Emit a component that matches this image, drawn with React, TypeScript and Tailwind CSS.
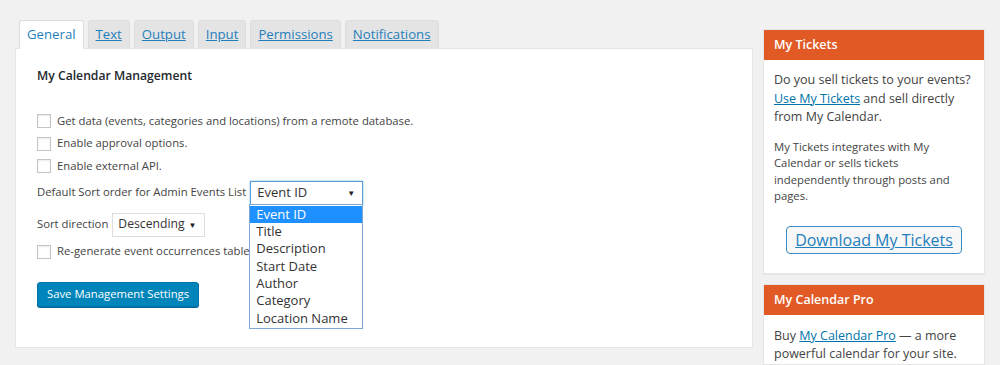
import React from 'react';

const tabs = ['General', 'Text', 'Output', 'Input', 'Permissions', 'Notifications'];
const sortOptions = ['Event ID', 'Title', 'Description', 'Start Date', 'Author', 'Category', 'Location Name'];

const Checkbox = () => (
  <span className="inline-block w-[14px] h-[14px] border border-[#c3c6c9] bg-white shadow-[inset_0_1px_2px_rgba(0,0,0,0.08)] mr-[6px] shrink-0" />
);

const CheckRow = ({ label }: { label: string }) => (
  <div className="flex items-center h-[22.5px]">
    <Checkbox />
    <span>{label}</span>
  </div>
);

const Arrow = () => <span className="text-[8px] text-[#222] leading-none">▼</span>;

const SideBox = ({ title, children }: { title: string; children: React.ReactNode }) => (
  <div className="bg-white border border-[#e5e5e5] shadow-[0_1px_1px_rgba(0,0,0,0.04)]">
    <div className="h-[30px] bg-[#e15a25] text-white font-semibold text-[12.5px] flex items-center px-[10px]">{title}</div>
    <div className="pl-[10px] pr-[6px]">{children}</div>
  </div>
);

export default function App() {
  return (
    <div className="w-full h-[365px] bg-[#f1f1f1] flex pt-[20px] pl-[15px] overflow-hidden text-[#444] font-['Open_Sans',sans-serif] text-[11.3px]">
      <div className="w-[738px] shrink-0">
        <div className="flex gap-[4px] pl-[4px] h-[28px]">
          {tabs.map((t, i) => (
            <div
              key={t}
              className={`h-[29px] px-[7px] flex items-center border border-[#ddd] rounded-t-[3px] text-[13.2px] text-[#1f7fbc] ${
                i === 0 ? 'bg-white border-b-white relative z-10' : 'bg-[#e4e4e4] underline'
              }`}
            >
              {t}
            </div>
          ))}
        </div>
        <div className="h-[300px] bg-white border border-[#e5e5e5] pl-[21px] pt-[18px] relative">
          <h3 className="text-[12.2px] font-semibold text-[#23282d] h-[17px] leading-[17px]">My Calendar Management</h3>
          <div className="mt-[26px]">
            <CheckRow label="Get data (events, categories and locations) from a remote database." />
            <CheckRow label="Enable approval options." />
            <CheckRow label="Enable external API." />
          </div>
          <div className="flex items-center mt-[3px] h-[24px]">
            <span className="mr-[4px]">Default Sort order for Admin Events List</span>
            <div className="relative">
              <div className="w-[113px] h-[24px] border border-[#5b9dd9] shadow-[0_0_2px_rgba(30,140,190,0.6)] bg-white flex items-center justify-between pl-[6px] pr-[7px] text-[13px] text-[#333]">
                <span>Event ID</span>
                <Arrow />
              </div>
              <div className="absolute left-[-1px] top-[23px] w-[114px] border border-[#7ea6d6] bg-white z-20 py-[1px]">
                {sortOptions.map((o, i) => (
                  <div
                    key={o}
                    className={`h-[17.4px] leading-[17.4px] px-[6px] text-[13px] ${i === 0 ? 'bg-[#1e90ff] text-white' : 'text-[#333]'}`}
                  >
                    {o}
                  </div>
                ))}
              </div>
            </div>
          </div>
          <div className="flex items-center mt-[8px] h-[24px]">
            <span className="mr-[4px]">Sort direction</span>
            <div className="w-[93px] h-[24px] border border-[#ddd] bg-white flex items-center justify-between pl-[5px] pr-[8px] text-[12.2px] text-[#333]">
              <span>Descending</span>
              <Arrow />
            </div>
          </div>
          <div className="mt-[4px]">
            <CheckRow label="Re-generate event occurrences table" />
          </div>
          <button className="mt-[19px] h-[25px] px-[9px] bg-[#0085ba] border border-[#0073aa] rounded-[3px] text-white text-[11.3px] shadow-[0_1px_0_#006799]">
            Save Management Settings
          </button>
        </div>
      </div>
      <div className="ml-[10px] w-[222px] shrink-0 pt-[9px] flex flex-col gap-[10px]">
        <SideBox title="My Tickets">
          <p className="text-[12.5px] leading-[18.5px] mt-[11px]">
            Do you sell tickets to your events? <a className="text-[#0073aa] underline">Use My Tickets</a> and sell directly from My Calendar.
          </p>
          <p className="text-[11.3px] leading-[16.6px] mt-[12px] pr-[4px]">
            My Tickets integrates with My Calendar or sells tickets independently through posts and pages.
          </p>
          <div className="flex justify-center mt-[21px] mb-[19px] pr-[4px]">
            <a className="h-[28px] px-[8px] border border-[#3a8fc7] rounded-[4px] bg-[#f7f7f7] text-[#1f7fbc] underline text-[16px] flex items-center">
              Download My Tickets
            </a>
          </div>
        </SideBox>
        <SideBox title="My Calendar Pro">
          <p className="text-[12.5px] leading-[18.5px] mt-[12px]">
            Buy <a className="text-[#0073aa] underline">My Calendar Pro</a> — a more powerful calendar for your site.
          </p>
        </SideBox>
      </div>
    </div>
  );
}
